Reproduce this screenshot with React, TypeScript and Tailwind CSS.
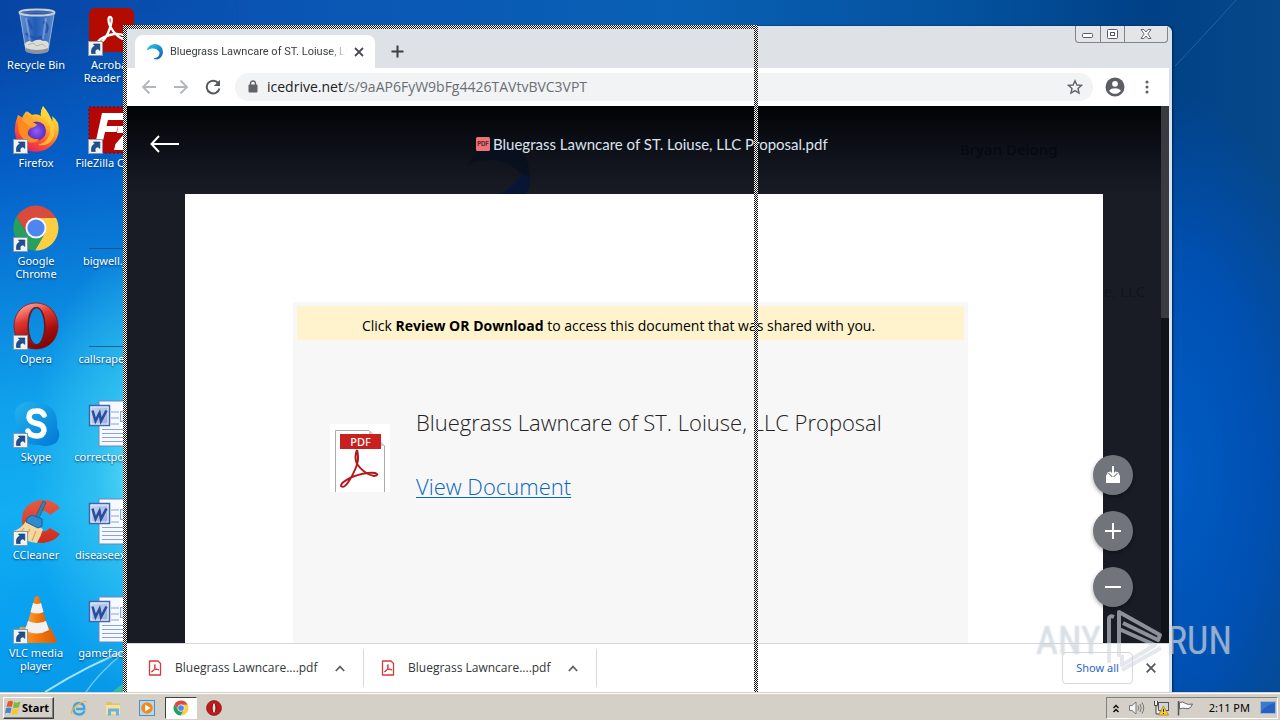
import type { ReactNode } from "react";

const tahoma = "font-['Noto_Sans','Open_Sans',sans-serif]";
const segoe = "font-['Open_Sans','Noto_Sans',sans-serif]";

function ShortcutArrow() {
  return (
    <svg className="absolute bottom-0 left-0" width="16" height="16" viewBox="0 0 16 16" aria-hidden="true">
      <rect x="1.5" y="1.5" width="14" height="14" fill="#eef3f8" stroke="#8b98a8" />
      <path d="M4.500 13.500C4 9.500 5.200 7 8 5.800L6.400 4h6.400v6.400L11 8.800C8.500 9.500 7.500 11 8.300 13.500Z" fill="#1d5292" stroke="#12305f" strokeWidth=".6" />
    </svg>
  );
}

function RecycleIcon() {
  return (
    <svg width="48" height="48" viewBox="0 0 48 48" aria-hidden="true">
      <defs>
        <linearGradient id="bin" x1="0" x2="1">
          <stop offset="0" stopColor="#9dbbe4" stopOpacity=".65" />
          <stop offset=".45" stopColor="#2f68c2" stopOpacity=".6" />
          <stop offset="1" stopColor="#8fadd9" stopOpacity=".65" />
        </linearGradient>
      </defs>
      <path d="M7.500 4L14 43Q25 47 36 43L42.500 4Z" fill="url(#bin)" stroke="#a6bfe2" strokeWidth=".8" />
      <path d="M12.500 36Q16 31 20 34Q26 30 31 33Q35 32 37 36L36 42Q25 47 14 42Z" fill="#dcdcd8" />
      <path d="M16 37l5-2 4 3 5-2 4 3" stroke="#b9b3a8" fill="none" />
      <path d="M14 25Q19 32 30 29M31 14Q38 16 34 25M16 12L20 21" stroke="#1f50ab" strokeWidth="2.500" fill="none" opacity=".8" />
      <path d="M14 10L18 33M34 10L31 31" stroke="#e7f0ff" opacity=".3" strokeWidth="2" />
      <path d="M13.500 40Q25 44 36.500 40L36 44Q25 48 14 44Z" fill="#8d949e" />
      <ellipse cx="25" cy="4.500" rx="17.500" ry="3" fill="#2f4e86" fillOpacity=".5" stroke="#c8cfd8" strokeWidth="2" />
    </svg>
  );
}

function AcrobatIcon() {
  return (
    <svg width="48" height="48" viewBox="0 0 48 48" aria-hidden="true">
      <rect x="2" y="0" width="45" height="44" rx="6" fill="#b30b00" />
      <path d="M23 9C21 9 21 14 23 18C27 26 34 32 39 31C42 29 35 25 27 26C20 27 12 31 11 34C10 38 17 34 21 25C25 16 26 9 23 9Z" fill="none" stroke="#fff" strokeWidth="2.300" />
    </svg>
  );
}

function FirefoxIcon() {
  return (
    <svg width="48" height="48" viewBox="0 0 48 48" aria-hidden="true">
      <defs>
        <linearGradient id="ff" x1=".8" y1="0" x2=".25" y2="1">
          <stop offset="0" stopColor="#fff44f" />
          <stop offset=".35" stopColor="#ffb52c" />
          <stop offset=".65" stopColor="#ff5a2e" />
          <stop offset="1" stopColor="#e5195f" />
        </linearGradient>
        <radialGradient id="ffp">
          <stop offset="0" stopColor="#8f5cff" />
          <stop offset="1" stopColor="#5a2fb5" />
        </radialGradient>
      </defs>
      <path d="M31 0Q28 6 29 10Q25 7 20 9Q14 3 13 7Q11 9 10 12L6 9Q2 18 3 27Q5 41 18 45Q31 48 40 39Q49 30 46 17Q43 12 40 10Q41 14 40 16Q38 8 31 0Z" fill="url(#ff)" />
      <circle cx="24.500" cy="25" r="9.500" fill="url(#ffp)" />
      <path d="M6 9Q14 13 19 18L25 18Q24 21 19 22Q15 24 16 29Q20 34 27 33Q24 38 17 36Q6 32 6 20Z" fill="#ff8a1f" />
      <path d="M13 9Q17 9 21 16L25 19Q21 22 17 20L10 14Z" fill="#ffa436" />
      <path d="M29 10Q40 16 38 27Q36 36 26 39Q38 41 42 30Q45 17 36 9Q31 5 31 0Q28 6 29 10Z" fill="#ffd33a" opacity=".75" />
    </svg>
  );
}

function FileZillaIcon() {
  return (
    <svg width="48" height="48" viewBox="0 0 48 48" aria-hidden="true">
      <rect x="2" y="1" width="46" height="46" fill="#b50606" stroke="#7d0c10" strokeWidth="1.500" strokeDasharray="2 2" />
      <path d="M15 7H40L39 14H21L19.500 20H31L29.500 26H18L15 39H8Z" fill="#fff" />
      <path d="M31 20H48V27L38 38H48V44H27L28.500 38L38 27H30Z" fill="#fff" />
    </svg>
  );
}

function ChromeGlyph({ size }: { size: number }) {
  return (
    <svg width={size} height={size} viewBox="0 0 48 48" aria-hidden="true">
      <path d="M24 14H44.100A22.500 22.500 0 0 1 23 46.500L33 29Z" fill="#fdce42" />
      <path d="M33 29L23 46.500A22.500 22.500 0 0 1 4.500 12.700L15 29.500Q24 40 33 29Z" fill="#26a05b" />
      <path d="M4.500 12.700L15 29L24 14H44A22.500 22.500 0 0 0 4.500 12.700Z" fill="#d94c3d" />
      <circle cx="24" cy="24" r="10.500" fill="#f4f6fa" />
      <circle cx="24" cy="24" r="8.600" fill="#4d86ee" />
    </svg>
  );
}

function OperaGlyph({ size }: { size: number }) {
  return (
    <svg width={size} height={size} viewBox="0 0 48 48" aria-hidden="true">
      <defs>
        <linearGradient id="op" x1=".2" y1="0" x2=".6" y2="1">
          <stop offset="0" stopColor="#ffb0a8" />
          <stop offset=".35" stopColor="#e03a30" />
          <stop offset=".7" stopColor="#a60d0d" />
          <stop offset="1" stopColor="#7d0505" />
        </linearGradient>
      </defs>
      <path fillRule="evenodd" d="M24 1C37 1 46 11 46 24S37 47 24 47S2 37 2 24S11 1 24 1ZM24 5.500C18 5.500 16 14 16 24S18 43 24 43S33 34 33 24S30 5.500 24 5.500Z" fill="url(#op)" stroke="#8a1514" strokeWidth=".8" />
      <ellipse cx="24.500" cy="24.200" rx="8.300" ry="18.500" fill="none" stroke="#631b22" strokeWidth="1.300" />
    </svg>
  );
}

function SkypeIcon() {
  return (
    <svg width="48" height="48" viewBox="0 0 48 48" aria-hidden="true">
      <defs>
        <linearGradient id="sk" x1="0" y1="0" x2="1" y2="1">
          <stop offset="0" stopColor="#22b4ef" />
          <stop offset="1" stopColor="#0078d4" />
        </linearGradient>
      </defs>
      <path d="M14 2Q20 1 24 3Q38 3 43 13Q46 20 45 27Q50 36 44 43Q36 48 27 45Q14 46 7 35Q4 27 4 20Q1 12 5 7Q9 3 14 2Z" fill="url(#sk)" />
      <path d="M32 15Q30 10.500 24 11Q17 11 17 17Q17 22 25 23.500Q32 25 32 30.500Q31 36 25 36Q18 36 16 31" fill="none" stroke="#fff" strokeWidth="5.500" strokeLinecap="round" />
    </svg>
  );
}

function CCleanerIcon() {
  return (
    <svg width="48" height="48" viewBox="0 0 48 48" aria-hidden="true">
      <defs>
        <linearGradient id="cc" x1="0" y1="0" x2="0" y2="1">
          <stop offset="0" stopColor="#e8593f" />
          <stop offset="1" stopColor="#cf2a1c" />
        </linearGradient>
      </defs>
      <path d="M48 10Q41 1 29 2Q9 5 10 24Q12 45 31 45Q42 44 48 36L38 30Q33 35 28 33Q21 31 22 22Q24 14 31 13Q35 13 38 17Z" fill="url(#cc)" />
      <path d="M14 23L31 31Q29 38 25 45Q12 44 2 33Q10 30 14 23Z" fill="#f3d79c" />
      <path d="M12 30L8 36M18 31L13 40M24 33L20 43" stroke="#d7a75c" strokeWidth="1.200" />
      <path d="M15 20L20 17L30 21L30 28L26 30L14 24Z" fill="#2f8ad0" stroke="#1b5f9f" />
      <path d="M24 18L31 3L34 4.500L27 20Z" fill="#337fb5" stroke="#205a89" strokeWidth=".7" />
    </svg>
  );
}

function VlcIcon() {
  return (
    <svg width="48" height="48" viewBox="0 0 48 48" aria-hidden="true">
      <defs>
        <linearGradient id="vl" x1="0" x2="1">
          <stop offset="0" stopColor="#ffab43" />
          <stop offset=".5" stopColor="#f47b0c" />
          <stop offset="1" stopColor="#d95c00" />
        </linearGradient>
      </defs>
      <path d="M8 31H38L45 45Q44 47 40 47H6Q3 46 3 44Z" fill="url(#vl)" />
      <path d="M13 36Q25 42 37 36L27 1Q25 -1 23 1Z" fill="url(#vl)" />
      <path d="M21 7Q25 9 29 7L31.500 16Q25 19 18.500 16Z" fill="#f1f1f1" />
      <path d="M16 25Q25 29 34 25L37 34Q25 41 13 34Z" fill="#f1f1f1" />
    </svg>
  );
}

function WordIcon() {
  return (
    <svg width="48" height="48" viewBox="0 0 48 48" aria-hidden="true">
      <defs>
        <linearGradient id="wd" x1="0" y1="0" x2="1" y2="1">
          <stop offset="0" stopColor="#8fb0e6" />
          <stop offset="1" stopColor="#2a56b0" />
        </linearGradient>
      </defs>
      <path d="M12 1H48V46H12Z" fill="#f6f9ff" stroke="#6f87b8" />
      <path d="M24 12H32M24 18H32M24 24H32M15 29.500H44M15 33.500H44M15 37.500H44M15 41.500H44" stroke="#8ba3d4" />
      <rect x="33.500" y="11.500" width="12" height="10" fill="#dbe6f8" stroke="#8ba3d4" />
      <rect x="2.500" y="5.500" width="20" height="20" fill="#e8effb" stroke="#3f66b0" strokeWidth="1.500" />
      <rect x="4.500" y="7.500" width="16" height="16" fill="url(#wd)" opacity=".4" />
      <path d="M5.500 10.500L8.500 21L12.500 13L14 21L19.500 10.500" fill="none" stroke="#2a4fa0" strokeWidth="2.600" />
    </svg>
  );
}

function ImageLine() {
  return (
    <svg width="48" height="48" viewBox="0 0 48 48" aria-hidden="true">
      <path d="M2 44.500H48" stroke="#17426d" strokeOpacity=".7" />
    </svg>
  );
}

type Item = { label: string; icon: ReactNode; shortcut?: boolean; oneLine?: boolean };

const firstColumn: Item[] = [
  { label: "Recycle Bin", icon: <RecycleIcon />, oneLine: true },
  { label: "Firefox", icon: <FirefoxIcon />, shortcut: true },
  { label: "Google Chrome", icon: <ChromeGlyph size={48} />, shortcut: true },
  { label: "Opera", icon: <OperaGlyph size={48} />, shortcut: true },
  { label: "Skype", icon: <SkypeIcon />, shortcut: true },
  { label: "CCleaner", icon: <CCleanerIcon />, shortcut: true },
  { label: "VLC media player", icon: <VlcIcon />, shortcut: true },
];

const secondColumn: Item[] = [
  { label: "Acrobat Reader DC", icon: <AcrobatIcon />, shortcut: true },
  { label: "FileZilla Client", icon: <FileZillaIcon />, shortcut: true, oneLine: true },
  { label: "bigwell.jpg", icon: <ImageLine />, oneLine: true },
  { label: "callsrape.jpg", icon: <ImageLine />, oneLine: true },
  { label: "correctport.rtf", icon: <WordIcon />, oneLine: true },
  { label: "diseaseexa.rtf", icon: <WordIcon />, oneLine: true },
  { label: "gamefacil.rtf", icon: <WordIcon />, oneLine: true },
];

function DesktopColumn({ items }: { items: Item[] }) {
  return (
    <ul className="w-[72px]">
      {items.map((item) => (
        <li key={item.label} className="h-[98px] pt-2">
          <button type="button" className="flex w-full flex-col items-center">
            <span className="relative block size-12">
              {item.icon}
              {item.shortcut && <ShortcutArrow />}
            </span>
            <span
              className={`${item.oneLine ? "whitespace-nowrap" : "w-16"} mt-[2px] text-center text-[11px] leading-[13px] text-white [text-shadow:0_1px_2px_#00346a]`}
            >
              {item.label}
            </span>
          </button>
        </li>
      ))}
    </ul>
  );
}

function Wallpaper() {
  return (
    <div className="absolute inset-0 bg-[linear-gradient(90deg,#0745a4_0%,#0a55b4_22%,#0960b4_52%,#04529f_75%,#004086_90%,#07488a_100%)]">
      <div className="absolute inset-y-0 left-0 w-[240px] bg-[linear-gradient(170deg,#0742a000_4%,#0560c8_24%,#0a86de_42%,#10a2ec_56%,#12adf2_70%,#08a0f0_85%,#0797e6_100%)] [mask-image:linear-gradient(90deg,#000_50%,transparent_100%)]" />
      <div className="absolute inset-y-0 left-0 w-[180px] bg-[radial-gradient(ellipse_120px_230px_at_150px_470px,#62def5_0%,#3cc9f1aa_45%,#19aff000_100%)]" />
      <div className="absolute inset-y-0 right-0 w-[110px] bg-[radial-gradient(ellipse_170px_380px_at_0px_470px,#005cc4_0%,#0050b2_55%,#0050b200_100%)]" />
      <svg className="absolute bottom-0 left-0" width="130" height="60" viewBox="0 0 130 60" aria-hidden="true">
        <path d="M45 60Q90 32 130 17" stroke="#d9fbff" strokeOpacity=".75" strokeWidth="2" fill="none" />
        <path d="M86 60Q98 42 122 22" stroke="#c8f5ff" strokeOpacity=".5" strokeWidth="1.500" fill="none" />
        <path d="M112 60L130 46V60Z" fill="#43c98d" opacity=".7" />
      </svg>
      <svg className="absolute right-0 top-0" width="110" height="80" viewBox="0 0 110 80" aria-hidden="true">
        <path d="M5 66Q30 40 66 0" stroke="#6ba4dc" strokeOpacity=".3" fill="none" />
      </svg>
    </div>
  );
}

function IceLogo() {
  return (
    <svg width="18" height="18" viewBox="0 0 18 18" aria-hidden="true">
      <defs>
        <linearGradient id="ice" x1="0" y1="0" x2="1" y2="1">
          <stop offset="0" stopColor="#35c9dc" />
          <stop offset=".5" stopColor="#1a94d8" />
          <stop offset="1" stopColor="#1556a8" />
        </linearGradient>
      </defs>
      <path d="M.8 7.500Q2.500 1 9.500 1Q17 2 17 9.500Q16 15.500 11 16.500Q8 16.500 7.500 15Q11 15.500 12.500 13Q13.500 11.500 13.500 9.500Q11 5 6 5.500Q2.800 5.800 .8 7.500Z" fill="url(#ice)" />
    </svg>
  );
}

function TabStrip() {
  return (
    <div className="flex h-[42px] items-end bg-[#dee1e6] pl-2">
      <div className="flex h-[33px] w-[240px] items-center rounded-t-lg bg-white pl-[11px] pr-2">
        <IceLogo />
        <h2 className="ml-[6px] w-[177px] overflow-hidden whitespace-nowrap font-['Roboto',sans-serif] text-[11px] leading-5 text-[#3c4043] [mask-image:linear-gradient(90deg,#000_90%,transparent_100%)]">
          Bluegrass Lawncare of ST. Loiuse, LL
        </h2>
        <button type="button" aria-label="Close tab" className="ml-1 grid size-4 place-items-center">
          <svg width="10" height="10" viewBox="0 0 10 10" stroke="#4a4d51" strokeWidth="1.800">
            <path d="M1 1L9 9M9 1L1 9" />
          </svg>
        </button>
      </div>
      <button type="button" aria-label="New tab" className="mb-[9px] ml-[14px] grid size-4 place-items-center">
        <svg width="13" height="13" viewBox="0 0 13 13" stroke="#3c4043" strokeWidth="2">
          <path d="M6.500 .5V12.500M.5 6.500H12.500" />
        </svg>
      </button>
      <div className="mb-auto ml-auto mr-px flex h-[17px] w-[93px] rounded-b border border-t-0 border-[#7f848d] bg-[#e3e5e9]">
        <button type="button" aria-label="Minimize" className="grid flex-1 place-items-center border-r border-[#7f848d]">
          <svg width="13" height="8" viewBox="0 0 13 8"><rect x="1.500" y="3.500" width="10" height="4" rx="1" fill="#fff" stroke="#565b66" /></svg>
        </button>
        <button type="button" aria-label="Maximize" className="grid flex-1 place-items-center border-r border-[#7f848d]">
          <svg width="13" height="11" viewBox="0 0 13 11" fill="#fff" stroke="#565b66"><rect x="1.500" y=".5" width="10" height="9" rx="1" /><rect x="4.500" y="3.500" width="4" height="3" /></svg>
        </button>
        <button type="button" aria-label="Close" className="grid w-[42px] place-items-center">
          <svg width="12" height="10" viewBox="0 0 12 10" fill="#fff" stroke="#565b66" strokeWidth=".9"><path d="M1 .5H4L6 3L8 .5H11L7.800 5L11 9.500H8L6 7L4 9.500H1L4.200 5Z" /></svg>
        </button>
      </div>
    </div>
  );
}

function NavArrow({ flip }: { flip?: boolean }) {
  return (
    <svg className={flip ? "rotate-180" : ""} width="16" height="16" viewBox="0 0 16 16" fill="none" stroke="#b4b7ba" strokeWidth="1.800" aria-hidden="true">
      <path d="M15 8H2M8.500 1.500L2 8L8.500 14.500" />
    </svg>
  );
}

function Toolbar() {
  return (
    <div className="flex h-[38px] items-center bg-white pb-px pl-[14px] pr-[14px]">
      <button type="button" aria-label="Back"><NavArrow /></button>
      <button type="button" aria-label="Forward" className="ml-4"><NavArrow flip /></button>
      <button type="button" aria-label="Reload" className="ml-4">
        <svg width="16" height="16" viewBox="0 0 16 16" aria-hidden="true">
          <path d="M13.300 4.200A6.400 6.400 0 1 0 14.400 9.500" fill="none" stroke="#55585c" strokeWidth="2" />
          <path d="M15 .8V7H8.800Z" fill="#55585c" />
        </svg>
      </button>
      <div className="ml-[14px] flex h-7 min-w-0 flex-1 items-center rounded-full bg-[#f1f3f4] pl-[13px] pr-[10px]">
        <svg width="10" height="13" viewBox="0 0 10 13" aria-hidden="true">
          <path d="M2.500 5V3.500A2.500 2.500 0 0 1 7.500 3.500V5" fill="none" stroke="#5f6368" strokeWidth="1.400" />
          <rect x=".5" y="4.500" width="9" height="8" rx="1" fill="#5f6368" />
        </svg>
        <label htmlFor="address" className={`${segoe} ml-[9px] text-[14px] leading-5 text-[#202124]`}>icedrive.net</label>
        <input
          id="address"
          defaultValue="/s/9aAP6FyW9bFg4426TAVtvBVC3VPT"
          className={`${segoe} min-w-0 flex-1 bg-transparent text-[14px] leading-5 text-[#6b6f74] outline-none`}
        />
        <button type="button" aria-label="Bookmark this page">
          <svg width="16" height="16" viewBox="0 0 16 16" fill="none" stroke="#5f6368" strokeWidth="1.400">
            <path d="M8 1.800L9.900 6L14.400 6.400L11 9.500L12 14L8 11.600L4 14L5 9.500L1.600 6.400L6.100 6Z" />
          </svg>
        </button>
      </div>
      <button type="button" aria-label="Profile" className="ml-3">
        <svg width="20" height="20" viewBox="0 0 20 20">
          <circle cx="10" cy="10" r="9.500" fill="#5b5e62" />
          <circle cx="10" cy="6.800" r="2.900" fill="#fff" />
          <path d="M4 13.700Q6 11.300 10 11.300T16 13.700Q13.700 16.800 10 16.800T4 13.700Z" fill="#fff" />
        </svg>
      </button>
      <button type="button" aria-label="Menu" className="ml-[14px]">
        <svg width="16" height="16" viewBox="0 0 16 16" fill="#5b5e62"><circle cx="8" cy="3" r="1.500" /><circle cx="8" cy="8" r="1.500" /><circle cx="8" cy="13" r="1.500" /></svg>
      </button>
    </div>
  );
}

function PdfArt() {
  return (
    <svg width="60" height="68" viewBox="0 0 60 68" aria-hidden="true">
      <rect width="60" height="68" fill="#fff" />
      <path d="M5.500 68V6.500H39L54.500 22V68" fill="#fff" stroke="#a9abad" />
      <path d="M39 6.500V22H54.500Z" fill="#c9cbcc" />
      <rect x="10" y="10" width="41" height="15" fill="#c8201f" />
      <text x="30.500" y="21.500" textAnchor="middle" fontSize="11" fontFamily="Noto Sans, sans-serif" fontWeight="500" fill="#fff">PDF</text>
      <path d="M27 26Q24 33 27 40Q34 50 44 52Q50 51 45 49Q36 48 22 53Q10 59 11 62Q14 65 19 57Q27 44 28 36Q28 29 27 26" fill="none" stroke="#b3191c" strokeWidth="2" />
    </svg>
  );
}

const fab = "grid size-10 place-items-center rounded-full bg-[#71747b] shadow-[0_2px_4px_#0005]";

function Viewer() {
  return (
    <main className="relative flex min-h-0 flex-1 flex-col overflow-hidden bg-[#191c25]">
      <header className="relative flex h-[88px] shrink-0 items-start bg-[linear-gradient(#020305_0%,#0b0e15_40%,#191c25_100%)] pt-[27px]">
        <svg className="absolute left-[337px] top-[34px]" width="72" height="54" viewBox="0 0 72 54" aria-hidden="true">
          <path d="M4 26Q14 4 38 4Q66 8 66 38Q66 48 62 54H36Q52 46 58 34Q44 20 24 20Q10 20 4 26Z" fill="#06101f" opacity=".7" />
          <path d="M66 38Q66 48 62 54H36Q48 46 58 34Z" fill="#08184a" opacity=".5" />
        </svg>
        <span className="absolute left-[833px] top-[33px] text-[15px] font-medium leading-5 text-[#060910]">Bryan Delong</span>
        <button type="button" aria-label="Go back" className="ml-[23px] mt-px">
          <svg width="30" height="20" viewBox="0 0 30 20" fill="none" stroke="#fff" strokeWidth="2">
            <path d="M29 10H2M9 2L1.500 10L9 18" />
          </svg>
        </button>
        <h1 className="relative ml-[296px] flex items-center gap-[3px] whitespace-nowrap font-['Lato',sans-serif] text-[15px] leading-[22px] text-[#dde4ee]">
          <svg width="14" height="14" viewBox="0 0 14 14" aria-hidden="true">
            <rect width="14" height="14" rx="1.500" fill="#ee7377" />
            <text x="7" y="9" textAnchor="middle" fontSize="6" fontFamily="Inter, sans-serif" fontWeight="700" fill="#54202a">PDF</text>
          </svg>
          Bluegrass Lawncare of ST. Loiuse, LLC Proposal.pdf
        </h1>
      </header>
      <span className="absolute right-[24px] top-[175px] text-[15px] leading-5 text-[#101522]">e, LLC</span>
      <section className="relative ml-[58px] mr-[66px] flex-1 bg-white pl-[108px] pr-[135px] pt-[108px]">
        <div className="h-full bg-[#f7f7f7] px-1 pt-1">
          <p className={`${segoe} bg-[#fef3cc] pr-6 pt-[6px] text-center text-[14px] leading-7 text-black`}>
            Click <strong>Review OR Download</strong> to access this document that was shared with you.
          </p>
          <div className="mt-[63px] flex pl-[33px]">
            <div className="mt-[21px]"><PdfArt /></div>
            <div className={`${segoe} ml-[26px] text-[22px] font-light leading-8 text-[#222]`}>
              <p className="mt-[3px]">Bluegrass Lawncare of ST. Loiuse, LLC Proposal</p>
              <p className="mt-8"><a href="#document" className="text-[#0a66c0] underline decoration-1 underline-offset-2">View Document</a></p>
            </div>
          </div>
        </div>
      </section>
      <div className="absolute inset-y-0 right-0 w-2 bg-[#101319]">
        <div className="h-[212px] bg-[#393b41]" />
      </div>
      <div className="absolute bottom-9 right-9 flex flex-col gap-4">
        <button type="button" aria-label="Download" className={fab}>
          <svg width="18" height="20" viewBox="0 0 18 20" fill="none">
            <path d="M2 11L4 7H14L16 11V18H2Z" fill="#fff" />
            <path d="M9 1V10M5.500 7L9 10.500L12.500 7" stroke="#71747b" strokeWidth="4" />
            <path d="M9 1V10M5.500 7L9 10.500L12.500 7" stroke="#fff" strokeWidth="2" />
            <path d="M2 12H16V18H2Z" fill="#fff" />
          </svg>
        </button>
        <button type="button" aria-label="Zoom in" className={fab}>
          <svg width="16" height="16" viewBox="0 0 16 16" stroke="#fff" strokeWidth="2"><path d="M8 0V16M0 8H16" /></svg>
        </button>
        <button type="button" aria-label="Zoom out" className={fab}>
          <svg width="16" height="16" viewBox="0 0 16 16" stroke="#fff" strokeWidth="2"><path d="M0 8H16" /></svg>
        </button>
      </div>
    </main>
  );
}

function Download({ name }: { name: string }) {
  return (
    <div className="my-[5px] flex items-center border-r border-[#d5d7da] pl-[17px] pr-[18px]">
      <button type="button" className={`${segoe} flex w-[170px] items-center gap-[13px] whitespace-nowrap text-[12px] text-[#333639]`}>
        <svg className="shrink-0" width="14" height="16" viewBox="0 0 14 16" fill="none" stroke="#d63a3a" aria-hidden="true">
          <path d="M1.500 1H10L12.500 3.500V15H1.500Z" strokeWidth="1.300" strokeLinejoin="round" />
          <path d="M7 4.500Q6 5.500 7 7.500Q8.500 10 11 10Q11 8.800 7 9.500Q3.500 10.500 3.500 12Q5 12 6.500 9Q7.500 6.500 7 4.500Z" />
        </svg>
        {name}
      </button>
      <button type="button" aria-label={`Options for ${name}`} className="ml-[17px]">
        <svg width="10" height="7" viewBox="0 0 10 7" fill="none" stroke="#5f6368" strokeWidth="1.800"><path d="M.8 6L5 1.600L9.200 6" /></svg>
      </button>
    </div>
  );
}

function DownloadShelf() {
  return (
    <footer className="flex h-[49px] shrink-0 items-stretch border-t border-[#d5d7da] bg-white pl-1">
      <Download name="Bluegrass Lawncare....pdf" />
      <Download name="Bluegrass Lawncare....pdf" />
      <button type="button" className="my-2 ml-auto w-[71px] rounded border border-[#d5d7da] text-[11px] text-[#1f66c8]">Show all</button>
      <button type="button" aria-label="Close downloads" className="ml-[13px] mr-[13px]">
        <svg width="10" height="10" viewBox="0 0 10 10" stroke="#55585c" strokeWidth="1.800"><path d="M.7 .7L9.300 9.300M9.300 .7L.7 9.300" /></svg>
      </button>
    </footer>
  );
}

const dither = "bg-[repeating-conic-gradient(#111_0_25%,#fff_0_50%)] bg-[length:2px_2px]";

function DragOutline() {
  return (
    <div className="pointer-events-none absolute bottom-0 left-[123px] top-[25px] w-[635px]">
      <div className={`absolute inset-x-0 top-0 h-1 ${dither}`} />
      <div className={`absolute inset-y-0 left-0 w-1 ${dither}`} />
      <div className={`absolute inset-y-0 right-0 w-1 ${dither}`} />
    </div>
  );
}

function Watermark() {
  return (
    <div aria-hidden="true" className="pointer-events-none absolute bottom-[18px] right-[48px] flex items-center gap-1 font-['Liberation_Sans_Narrow','Roboto_Condensed','Liberation_Sans',sans-serif] text-[38px] leading-[66px] text-[#dfe5ec]/60 [text-shadow:0_0_2px_#77889955]">
      <span>ANY</span>
      <svg width="58" height="64" viewBox="0 0 58 64" fill="none" stroke="#d4d9df" strokeOpacity=".62" strokeWidth="4" strokeLinejoin="round">
        <path d="M4 54V10Q4 6 9 8M14 48V3L55 26L53 31L18 14M14 20L50 36L17 56V46" />
        <path d="M17 61L56 39" />
      </svg>
      <span>RUN</span>
    </div>
  );
}

function TaskBar() {
  return (
    <nav aria-label="Taskbar" className="relative z-10 flex h-7 shrink-0 items-center border-t border-[#d4d0c8] bg-[#d4d0c8] pl-[3px] pr-[2px] shadow-[inset_0_1px_0_#fff]">
      <button type="button" className="mt-[3px] flex h-[22px] w-[51px] items-center gap-px border border-b-[#404040] border-l-white border-r-[#404040] border-t-white pl-px text-[11px] font-bold text-black shadow-[inset_-1px_-1px_0_#808080]">
        <svg width="16" height="16" viewBox="0 0 16 16" aria-hidden="true">
          <path d="M3 1.500Q5.500 0 8 1.500L6.800 7Q4.500 5.800 1.500 7Z" fill="#e8572a" />
          <path d="M9 2Q12 3.500 15.500 1.500L14 7.300Q11 8.500 8 7.400Z" fill="#7fba3c" />
          <path d="M1.200 8Q4 6.800 6.500 8L5.200 13.500Q3 12 0 13.500Z" fill="#3b86d8" />
          <path d="M7.600 8.500Q10 9.500 13.500 8.300L12 14Q9 15 6.300 14Z" fill="#f8c52c" />
        </svg>
        Start
      </button>
      <div className="mt-[3px] flex items-center">
        <button type="button" aria-label="Internet Explorer" className="ml-[17px]">
          <svg width="16" height="16" viewBox="0 0 16 16" fill="none">
            <path d="M13.500 11Q12 14.500 8 14.500Q2.500 14 2.500 8.500Q3 3 8 3Q13.500 3.500 13.300 9H5" stroke="#41a5e2" strokeWidth="2.400" />
            <path d="M1 14Q-1 10 7 4.500Q15 -.5 15.500 2.500" stroke="#e9b63a" strokeWidth="1.200" />
          </svg>
        </button>
        <button type="button" aria-label="File Explorer" className="ml-[18px]">
          <svg width="16" height="16" viewBox="0 0 16 16">
            <path d="M1 2H6L7 3.500H15V14H1Z" fill="#e3c260" />
            <path d="M1 5H15V14H1Z" fill="#f6e3a0" />
            <path d="M3 8.500H14V15.500H11V11.500H6V15.500H3Z" fill="#6db4dd" />
          </svg>
        </button>
        <button type="button" aria-label="Media Player" className="ml-[18px]">
          <svg width="16" height="16" viewBox="0 0 16 16">
            <rect x=".5" y=".5" width="15" height="15" fill="#b9d8f0" stroke="#4f8fc4" />
            <circle cx="8" cy="8" r="5.800" fill="#f08a1c" />
            <path d="M6.200 4.600L11.400 8L6.200 11.400Z" fill="#fff" />
          </svg>
        </button>
        <button type="button" aria-label="Google Chrome" className="ml-[10px] grid h-[22px] w-8 place-items-center border border-b-white border-l-[#404040] border-r-white border-t-[#404040] bg-white">
          <ChromeGlyph size={16} />
        </button>
        <button type="button" aria-label="Opera" className="ml-[9px]">
          <svg width="16" height="16" viewBox="0 0 16 16">
            <circle cx="8" cy="8" r="7.500" fill="#c2181b" stroke="#7f0f10" strokeWidth=".6" />
            <ellipse cx="8" cy="8" rx="2" ry="5.300" fill="#e8dcd8" stroke="#6f0c0d" />
          </svg>
        </button>
      </div>
      <div className="ml-auto mt-[3px] flex h-[22px] w-[172px] items-center border border-b-white border-l-[#808080] border-r-white border-t-[#808080] pl-[5px] pr-px text-[11px] text-black">
        <button type="button" aria-label="Show hidden icons">
          <svg width="8" height="9" viewBox="0 0 8 9" fill="none" stroke="#000" strokeWidth="1.300"><path d="M1.500 4L4 1.500L6.500 4M1.500 8L4 5.500L6.500 8" /></svg>
        </button>
        <svg className="ml-2" width="17" height="16" viewBox="0 0 17 16" fill="none" stroke="#777" aria-label="Volume">
          <path d="M1.500 5.500H4L8 2V14L4 10.500H1.500Z" fill="#f4f4f4" />
          <path d="M10 5.500Q11.500 8 10 10.500M12 4Q14.500 8 12 12M14 2.500Q17.500 8 14 13.500" />
        </svg>
        <svg className="ml-2" width="16" height="16" viewBox="0 0 16 16" aria-label="Network">
          <rect x="5.500" y="2.500" width="10" height="8" fill="#cfd4da" stroke="#555" />
          <path d="M1.500 1V5.500H4.500V1M3 5.500V14H7" fill="#eee" stroke="#444" />
          <path d="M10.500 6L15.500 15H5.500Z" fill="#f5d02c" stroke="#9c7c0a" strokeWidth=".7" />
          <path d="M10.500 9V12M10.500 13V14" stroke="#222" />
        </svg>
        <svg className="ml-2" width="16" height="16" viewBox="0 0 16 16" aria-label="Action center">
          <path d="M1.500 1V15.500" stroke="#555" strokeWidth="1.500" />
          <path d="M2.500 2.500Q6 1 8.500 3.500Q11 5 15.500 4L13.500 7.500Q11 9.500 8.500 8.500Q6 7.500 2.500 9Z" fill="#fafafa" stroke="#666" />
        </svg>
        <time className="ml-auto mr-[10px] whitespace-nowrap">2:11 PM</time>
        <svg width="16" height="14" viewBox="0 0 16 14" aria-label="Show desktop">
          <rect x=".5" y=".5" width="15" height="12" fill="#2461c0" stroke="#9fb6d4" />
          <path d="M1 11Q6 4 15 2V1H1Z" fill="#3d78cf" />
        </svg>
      </div>
    </nav>
  );
}

export default function App() {
  return (
    <div className={`${tahoma} flex h-screen flex-col overflow-hidden`}>
      <div className="relative min-h-0 flex-1 overflow-hidden">
        <Wallpaper />
        <div className="relative flex gap-[3px]">
          <DesktopColumn items={firstColumn} />
          <DesktopColumn items={secondColumn} />
        </div>
        <div className="absolute bottom-0 left-[124px] right-[108px] top-[26px] flex flex-col overflow-hidden rounded-tr-md border-x-[3px] border-[#d8e2ee] bg-white shadow-[1px_0_2px_#00224d]">
          <TabStrip />
          <Toolbar />
          <Viewer />
          <DownloadShelf />
        </div>
        <DragOutline />
        <Watermark />
      </div>
      <TaskBar />
    </div>
  );
}
